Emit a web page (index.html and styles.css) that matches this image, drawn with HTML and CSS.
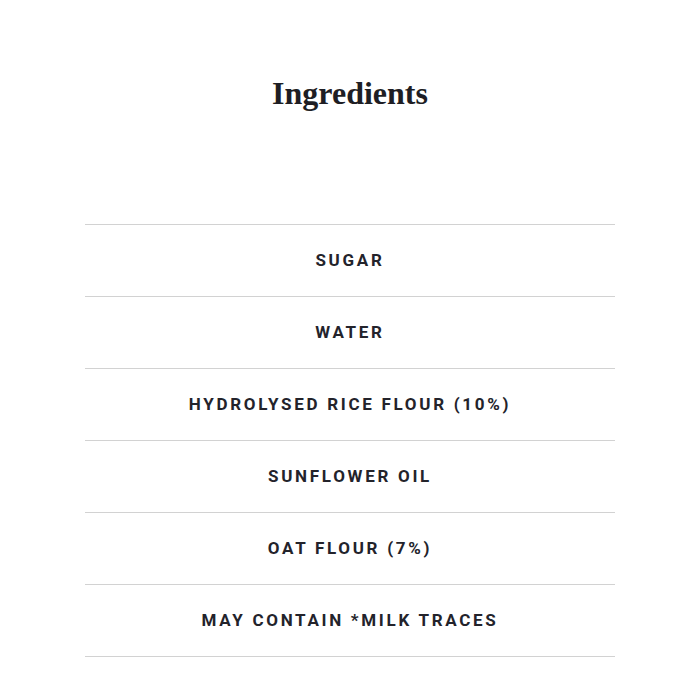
FILE: index.html
```html
<!DOCTYPE html>
<html>
<head>
<meta charset="utf-8">
<link rel="stylesheet" href="styles.css">
</head>
<body>
<main class="page">
  <h1 class="title">Ingredients</h1>
  <ul class="list">
    <li class="item">SUGAR</li>
    <li class="item">WATER</li>
    <li class="item">HYDROLYSED RICE FLOUR (10%)</li>
    <li class="item">SUNFLOWER OIL</li>
    <li class="item">OAT FLOUR (7%)</li>
    <li class="item">MAY CONTAIN *MILK TRACES</li>
  </ul>
</main>
</body>
</html>
```
FILE: styles.css
```css
html, body {
  margin: 0;
  padding: 0;
  background: #fff;
}
.page {
  width: 530px;
  margin: 0 auto;
  padding-top: 73px;
}
.title {
  margin: 0;
  height: 40px;
  line-height: 40px;
  text-align: center;
  font-family: "Liberation Serif", serif;
  font-weight: bold;
  font-size: 32px;
  color: #1e1e24;
}
.list {
  list-style: none;
  margin: 111px 0 0 0;
  padding: 0;
  border-top: 1px solid #d2d2d2;
}
.item {
  height: 69px;
  padding-bottom: 2px;
  border-bottom: 1px solid #d2d2d2;
  display: flex;
  align-items: center;
  justify-content: center;
  font-family: Roboto, sans-serif;
  font-weight: bold;
  font-size: 17px;
  letter-spacing: 2.7px;
  color: #23232b;
}
```
